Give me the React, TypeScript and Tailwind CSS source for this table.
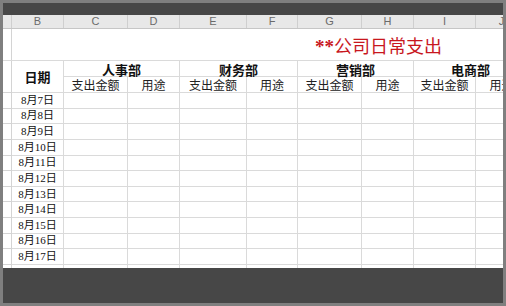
const COLS = ["", "B", "C", "D", "E", "F", "G", "H", "I", "J"];
const GRID = "grid grid-cols-[9px_52px_64px_52px_67px_51px_64px_52px_62px_52px]";
const DEPTS = ["人事部", "财务部", "营销部", "电商部"];
// last row is only a sliver above the bottom strip, so it shows no date
const DATES = [...Array.from({ length: 11 }, (_, i) => `8月${i + 7}日`), ""];

const cjk = { fontFamily: '"Noto Sans CJK SC", "Noto Sans", sans-serif' };
const serif = { fontFamily: '"Liberation Serif", "Noto Sans CJK SC", serif' };

export default function App() {
  return (
    <div className="w-[506px] h-[306px] bg-[#7f7f7f] p-[3px]">
      <div className="w-[500px] h-[300px] flex flex-col overflow-hidden">
        {/* toolbar strip */}
        <div className="h-[12px] shrink-0 bg-[#474747]" />

        {/* column letters */}
        <div className={`${GRID} h-[14px] shrink-0 bg-[#e8e8e8] border-b border-[#c6c6c6]`}>
          {COLS.map((c, i) => (
            <div
              key={i}
              className="border-r border-[#cfcfcf] flex items-center justify-center text-[11px] leading-none text-[#6b6b6b]"
              style={{ fontFamily: '"Liberation Sans", sans-serif' }}
            >
              {c}
            </div>
          ))}
        </div>

        <div className="flex-1 overflow-hidden bg-white">
          {/* title row */}
          <div className={`${GRID} h-[32px] border-b border-[#dadada]`}>
            <div className="border-r border-[#d4d4d4]" />
            <div className="col-span-9 flex items-end pb-[4px] pl-[303px]">
              <span className="text-[18px] leading-none text-[#c8171e] whitespace-nowrap" style={cjk}>
                <span className="font-bold text-[19px]" style={serif}>**</span>公司日常支出
              </span>
            </div>
          </div>

          {/* header rows */}
          <div className={`${GRID} grid-rows-[16px_16px]`}>
            <div className="row-span-2 border-r border-b border-[#d4d4d4]" />
            <div
              className="row-span-2 border-r border-b border-[#dadada] flex items-center justify-center text-[13px] font-bold text-[#111]"
              style={cjk}
            >
              日期
            </div>
            {DEPTS.map((d) => (
              <div
                key={d}
                className="col-span-2 border-r border-b border-[#dadada] flex items-center justify-center text-[13px] font-bold leading-none text-[#111] pt-[1px]"
                style={cjk}
              >
                {d}
              </div>
            ))}
            {DEPTS.map((d) => [
              <div
                key={d + "a"}
                className="border-r border-b border-[#dadada] flex items-center justify-center text-[12px] leading-none text-[#222] whitespace-nowrap"
                style={cjk}
              >
                支出金额
              </div>,
              <div
                key={d + "b"}
                className="border-r border-b border-[#dadada] flex items-center justify-center text-[12px] leading-none text-[#222] whitespace-nowrap"
                style={cjk}
              >
                用途
              </div>,
            ])}
          </div>

          {/* data rows */}
          {DATES.map((d, r) => (
            <div key={r} className={`${GRID} h-[15.64px]`}>
              <div className="border-r border-b border-[#d4d4d4]" />
              <div
                className="border-r border-b border-[#dadada] flex items-center justify-center text-[11px] leading-none text-[#111] whitespace-nowrap"
                style={serif}
              >
                {d}
              </div>
              {Array.from({ length: 8 }, (_, i) => (
                <div key={i} className="border-r border-b border-[#dadada]" />
              ))}
            </div>
          ))}
        </div>

        {/* bottom strip */}
        <div className="h-[35px] shrink-0 bg-[#474747]" />
      </div>
    </div>
  );
}
